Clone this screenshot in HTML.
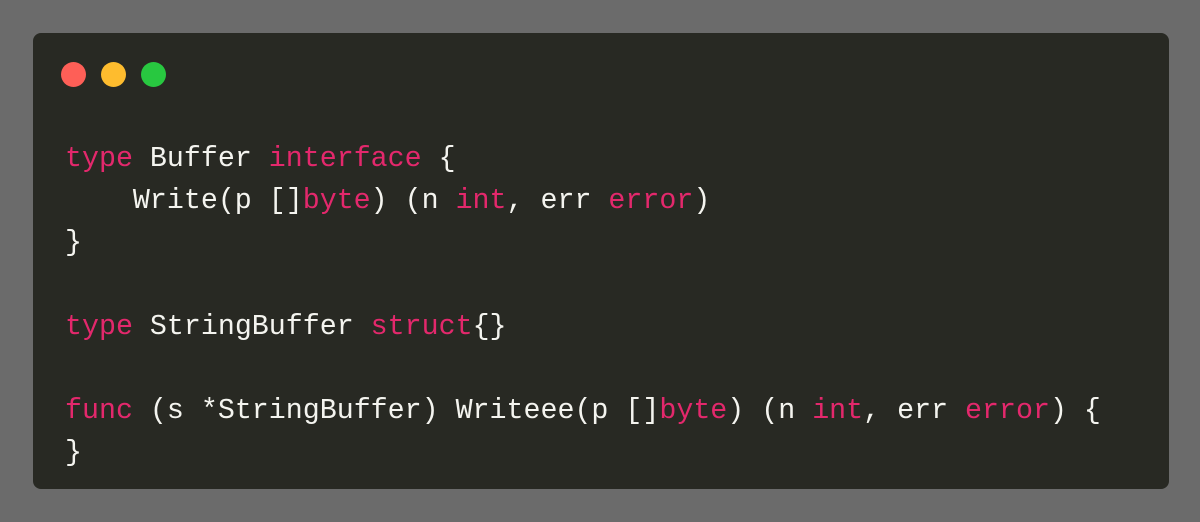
<!DOCTYPE html>
<html><head><style>
html,body{margin:0;padding:0;width:1200px;height:522px;background:#6b6b6b;overflow:hidden}
.card{position:absolute;left:33px;top:33px;width:1136px;height:456px;background:#282923;border-radius:8px}
.d{position:absolute;top:29px;width:25px;height:25px;border-radius:50%}
pre{position:absolute;left:32px;top:105px;margin:0;font-family:"Liberation Mono",monospace;font-size:28.3px;line-height:42px;color:#f4f4ef}
.k{color:#e3286c}
</style></head><body>
<div class="card">
<div class="d" style="left:28px;background:#fe5f57"></div>
<div class="d" style="left:68px;background:#febc2e"></div>
<div class="d" style="left:108px;background:#28c840"></div>
<pre><span class="k">type</span> Buffer <span class="k">interface</span> {
    Write(p []<span class="k">byte</span>) (n <span class="k">int</span>, err <span class="k">error</span>)
}

<span class="k">type</span> StringBuffer <span class="k">struct</span>{}

<span class="k">func</span> (s *StringBuffer) Writeee(p []<span class="k">byte</span>) (n <span class="k">int</span>, err <span class="k">error</span>) {
}</pre>
</div>
</body></html>
